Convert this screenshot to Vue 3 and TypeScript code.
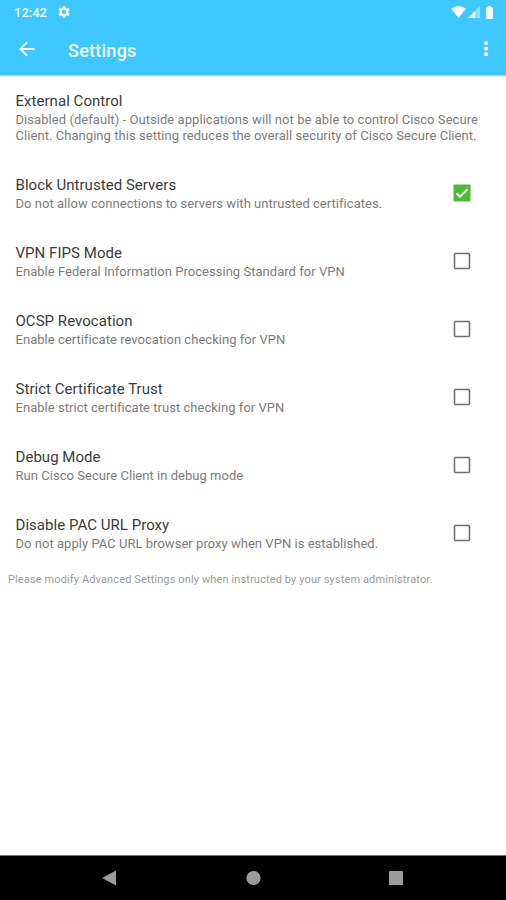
<script setup lang="ts">
import { reactive } from 'vue'

interface Setting {
  title: string
  summary: string
  checked: boolean
}

const settings = reactive<Setting[]>([
  { title: 'Block Untrusted Servers', summary: 'Do not allow connections to servers with untrusted certificates.', checked: true },
  { title: 'VPN FIPS Mode', summary: 'Enable Federal Information Processing Standard for VPN', checked: false },
  { title: 'OCSP Revocation', summary: 'Enable certificate revocation checking for VPN', checked: false },
  { title: 'Strict Certificate Trust', summary: 'Enable strict certificate trust checking for VPN', checked: false },
  { title: 'Debug Mode', summary: 'Run Cisco Secure Client in debug mode', checked: false },
  { title: 'Disable PAC URL Proxy', summary: 'Do not apply PAC URL browser proxy when VPN is established.', checked: false },
])
</script>

<template>
  <div class="screen">
    <header class="top">
      <div class="status">
        <span class="clock">12:42</span>
        <svg class="gear" viewBox="2 2 20 20"><path fill-rule="evenodd" d="M19.14 12.94c.04-.3.06-.61.06-.94s-.02-.64-.07-.94l2.03-1.58a.5.5 0 0 0 .12-.61l-1.92-3.32a.5.5 0 0 0-.59-.22l-2.39.96a7 7 0 0 0-1.62-.94l-.36-2.54A.5.5 0 0 0 13.92 2h-3.84a.5.5 0 0 0-.47.41l-.36 2.54a7.4 7.4 0 0 0-1.62.94l-2.39-.96a.5.5 0 0 0-.59.22L2.74 8.47a.5.5 0 0 0 .12.61l2.03 1.58a7 7 0 0 0 0 1.88l-2.03 1.98a.5.5 0 0 0-.12.61l1.92 3.32c.12.22.37.29.59.22l2.39-.96c.5.38 1.03.7 1.62.94l.36 2.54c.05.24.24.41.48.41h3.84c.24 0 .44-.17.47-.41l.36-2.54a7 7 0 0 0 1.62-.94l2.39.96c.22.08.47 0 .59-.22l1.92-3.32a.5.5 0 0 0-.12-.61zM12 15.6a3.6 3.6 0 1 1 0-7.2 3.6 3.6 0 0 1 0 7.2z" /></svg>
        <span class="spacer"></span>
        <svg class="wifi" viewBox="0 0 15 12"><path d="M0 2.5Q7.5-2.5 15 2.5L7.5 12z" /></svg>
        <svg class="signal" viewBox="0 0 12 12"><path opacity=".45" d="M12 0v12H0z" /><path d="M7 5v7H0z" /></svg>
        <svg class="battery" viewBox="0 0 7 13"><path d="M2 0h3v1.2h1q1 0 1 1V12q0 1-1 1H1q-1 0-1-1V2.200q0-1 1-1h1z" /></svg>
      </div>
      <div class="toolbar">
        <svg class="back" viewBox="0 0 16 16"><path d="M15.500 8H1.500M8.200 1.200L1.400 8l6.800 6.800" /></svg>
        <h1>Settings</h1>
        <svg class="more" viewBox="0 0 6 18"><circle cx="3" cy="3" r="2.100" /><circle cx="3" cy="8.600" r="2.100" /><circle cx="3" cy="14.200" r="2.100" /></svg>
      </div>
    </header>

    <main>
      <section class="row intro">
        <div class="copy">
          <h2>External Control</h2>
          <p>Disabled (default) - Outside applications will not be able to control Cisco Secure<br />Client. Changing this setting reduces the overall security of Cisco Secure Client.</p>
        </div>
      </section>
      <section v-for="item in settings" :key="item.title" class="row" @click="item.checked = !item.checked">
        <div class="copy">
          <h2>{{ item.title }}</h2>
          <p>{{ item.summary }}</p>
        </div>
        <svg class="box" viewBox="0 0 18 18">
          <template v-if="item.checked">
            <rect class="fill" x=".5" y=".5" width="17" height="17" rx="1" />
            <path class="tick" d="M3.500 9.200l3.500 3.500 7.500-7.500" />
          </template>
          <rect v-else class="outline" x="1.500" y="1.500" width="15" height="15" rx="1" />
        </svg>
      </section>
      <p class="note">Please modify Advanced Settings only when instructed by your system administrator.</p>
    </main>

    <nav class="navbar">
      <svg viewBox="0 0 16 16"><path d="M15 .5v15L1 8z" /></svg>
      <svg viewBox="0 0 16 16"><circle cx="8.500" cy="8" r="7.100" /></svg>
      <svg viewBox="0 0 16 16"><rect x="1" y="1" width="14" height="14" rx=".5" /></svg>
    </nav>
  </div>
</template>

<style>
body {
  margin: 0;
}
</style>

<style scoped>
.screen {
  display: flex;
  flex-direction: column;
  height: 900px;
  overflow: hidden;
  background: #fff;
  font-family: Roboto, sans-serif;
}

.top {
  box-sizing: border-box;
  height: 75px;
  background: #3fc8ff;
  color: #f4fcff;
  box-shadow: 0 1px 1px #b9d5e2;
}

.status {
  display: flex;
  align-items: center;
  height: 24px;
  padding: 0 13px 0 14px;
}

.status svg,
.more {
  fill: #f4fcff;
}

.clock {
  font-size: 13px;
  font-weight: 500;
}

.gear {
  width: 12px;
  height: 12px;
  margin-left: 11px;
}

.spacer {
  flex: 1;
}

.wifi {
  width: 15px;
  height: 12px;
}

.signal {
  width: 12px;
  height: 12px;
  margin: 0 6px 0 2px;
}

.battery {
  width: 7px;
  height: 13px;
}

.toolbar {
  display: flex;
  align-items: center;
  height: 50px;
  padding: 0 17px 0 19px;
}

.back {
  width: 16px;
  height: 16px;
  fill: none;
  stroke: #f4fcff;
  stroke-width: 1.9;
}

h1 {
  flex: 1;
  margin: 2px 0 0 33px;
  font-size: 18px;
  font-weight: 500;
  letter-spacing: 0.25px;
}

.more {
  width: 6px;
  height: 18px;
}

.row {
  display: flex;
  align-items: center;
  box-sizing: border-box;
  height: 68px;
  padding: 0 35.500px 0 15.500px;
}

.intro {
  height: 84px;
  padding-right: 0;
}

.copy {
  flex: 1;
  white-space: nowrap;
}

h2 {
  margin: 0;
  font-size: 15px;
  font-weight: 400;
  line-height: 20px;
  letter-spacing: 0.04px;
  color: #3c3c3c;
}

p {
  margin: 0;
  font-size: 13px;
  line-height: 16px;
  letter-spacing: 0.035px;
  color: #7c7c7c;
}

.row p {
  padding-top: 1px;
}

.intro p {
  line-height: 15.500px;
  letter-spacing: 0.055px;
}

.box {
  width: 18px;
  height: 18px;
}

.fill {
  fill: #50b832;
}

.tick {
  fill: none;
  stroke: #fff;
  stroke-width: 2;
}

.outline {
  fill: none;
  stroke: #707070;
  stroke-width: 1.6;
}

.note {
  padding: 5px 0 0 8px;
  font-size: 11px;
  letter-spacing: 0.125px;
  color: #9c9c9c;
  white-space: nowrap;
}

.navbar {
  display: flex;
  justify-content: space-between;
  align-items: center;
  box-sizing: border-box;
  height: 45px;
  margin-top: auto;
  padding: 0 102px 0 101px;
  border-top: 1px solid #777;
  background: #000;
}

.navbar svg {
  width: 16px;
  height: 16px;
  fill: #9c9c9c;
}
</style>
